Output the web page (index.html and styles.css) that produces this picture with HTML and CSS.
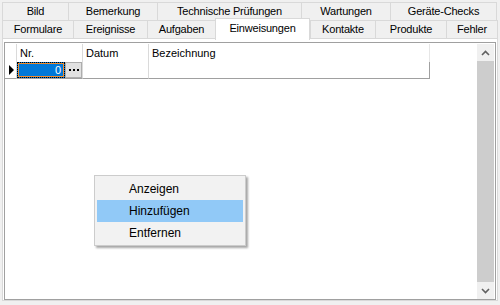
FILE: index.html
```html
<!DOCTYPE html>
<html lang="de">
<head>
    <meta charset="UTF-8">
    <title>Einweisungen</title>
    <link rel="stylesheet" href="styles.css">
</head>
<body>
    <div class="window">
        <div class="tabs">
            <div class="tab-row">
                <div class="tab w-bild">Bild</div>
                <div class="tab w-bemerkung">Bemerkung</div>
                <div class="tab w-technik">Technische Prüfungen</div>
                <div class="tab w-wartung">Wartungen</div>
                <div class="tab w-checks last">Geräte-Checks</div>
            </div>
            <div class="tab-row">
                <div class="tab w-formulare">Formulare</div>
                <div class="tab w-ereignisse">Ereignisse</div>
                <div class="tab w-aufgaben">Aufgaben</div>
                <div class="tab w-einweisungen active">Einweisungen</div>
                <div class="tab w-kontakte">Kontakte</div>
                <div class="tab w-produkte">Produkte</div>
                <div class="tab w-fehler last">Fehler</div>
            </div>
        </div>

        <div class="page">
            <div class="grid">
                <div class="table">
                    <div class="grid-row header">
                        <div class="cell row-head"></div>
                        <div class="cell col-nr">Nr.</div>
                        <div class="cell col-datum">Datum</div>
                        <div class="cell col-bez">Bezeichnung</div>
                    </div>
                    <div class="grid-row data">
                        <div class="cell row-head"><span class="current"></span></div>
                        <div class="cell col-nr edit">
                            <span class="value">0</span>
                            <span class="dots">
                                <svg width="11" height="2" viewBox="0 0 11 2"><rect x="0" y="0" width="2" height="2" fill="#000"/><rect x="4" y="0" width="2" height="2" fill="#000"/><rect x="8" y="0" width="2" height="2" fill="#000"/></svg>
                            </span>
                        </div>
                        <div class="cell col-datum"></div>
                        <div class="cell col-bez"></div>
                    </div>
                </div>
                <div class="scrollbar">
                    <div class="arrow-btn">
                        <svg width="9" height="6" viewBox="0 0 9 6"><polyline points="1,5 4.5,1.5 8,5" fill="none" stroke="#606060" stroke-width="1.6"/></svg>
                    </div>
                    <div class="thumb"></div>
                    <div class="arrow-btn">
                        <svg width="9" height="6" viewBox="0 0 9 6"><polyline points="1,1 4.5,4.5 8,1" fill="none" stroke="#606060" stroke-width="1.6"/></svg>
                    </div>
                </div>
            </div>
        </div>

        <div class="menu">
            <div class="menu-item">Anzeigen</div>
            <div class="menu-item hover">Hinzufügen</div>
            <div class="menu-item">Entfernen</div>
        </div>
    </div>
</body>
</html>
```

FILE: styles.css
```css
body {
    margin: 0;
    background-color: #f0f0f0;
    font-family: 'Liberation Sans', Arial, sans-serif;
    font-size: 11px;
    color: #000;
}
.window {
    position: relative;
    width: 500px;
    height: 305px;
    overflow: hidden;
}
.tabs {
    padding: 2px 0 0 2px;
}
.tab-row {
    display: flex;
    height: 18px;
}
.tab {
    box-sizing: border-box;
    height: 19px;
    border: 1px solid #d9d9d9;
    border-right: none;
    background-color: #f0f0f0;
    text-align: center;
    line-height: 17px;
    letter-spacing: -0.2px;
    white-space: nowrap;
}
.tab.last {
    border-right: 1px solid #d9d9d9;
}
.tab.active {
    position: relative;
    z-index: 2;
    height: 22px;
    margin-top: -2px;
    background-color: #fff;
    border-bottom: none;
    border-right: 1px solid #d9d9d9;
    line-height: 19px;
}
.w-bild { width: 66px; }
.w-bemerkung { width: 89px; }
.w-technik { width: 144px; }
.w-wartung { width: 89px; }
.w-checks { width: 107px; }
.w-formulare { width: 71px; }
.w-ereignisse { width: 74px; }
.w-aufgaben { width: 68px; }
.w-einweisungen { width: 95px; }
.w-kontakte { width: 65px; }
.w-produkte { width: 71px; }
.w-fehler { width: 52px; }

.page {
    box-sizing: border-box;
    margin-left: 2px;
    width: 496px;
    height: 263px;
    border: 1px solid #d9d9d9;
    background-color: #fff;
    padding: 3px 1px 1px 1px;
}
.grid {
    box-sizing: border-box;
    display: flex;
    height: 258px;
    border: 1px solid #a0a0a0;
    padding: 1px 1px 0 0;
    background-color: #fff;
}
.table {
    flex: 1;
}
.grid-row {
    display: flex;
}
.grid-row.header {
    height: 18px;
}
.grid-row.data {
    height: 17px;
}
.cell {
    box-sizing: border-box;
    height: 100%;
    border-right: 1px solid #dadada;
    padding-left: 3px;
    line-height: 16px;
}
.header .cell {
    line-height: 18px;
}
.data .cell {
    border-bottom: 1px solid #a0a0a0;
}
.row-head {
    width: 12px;
    padding: 0;
}
.col-nr {
    width: 66px;
}
.col-datum {
    width: 66px;
}
.col-bez {
    width: 281px;
}
.header .col-bez {
    border-right-color: #e6e6e6;
}
.data .col-bez {
    border-right-color: #a0a0a0;
}
.current {
    display: block;
    width: 0;
    height: 0;
    margin: 3px 0 0 4px;
    border-left: 5px solid #000;
    border-top: 5px solid transparent;
    border-bottom: 5px solid transparent;
}
.cell.edit {
    display: flex;
    padding: 0;
}
.value {
    box-sizing: border-box;
    width: 48px;
    height: 16px;
    background-color: #0078d7;
    color: #fff;
    text-align: right;
    padding-right: 3px;
    line-height: 14px;
    border: 1px dotted #000;
    box-shadow: inset 0 0 0 1px #f08c2c;
}
.dots {
    box-sizing: border-box;
    width: 17px;
    height: 16px;
    background-color: #e1e1e1;
    border: 1px solid #adadad;
    display: flex;
    align-items: center;
    justify-content: center;
    padding-left: 1px;
}
.dots svg {
    display: block;
}

.scrollbar {
    width: 17px;
    display: flex;
    flex-direction: column;
    background-color: #f0f0f0;
}
.arrow-btn {
    height: 17px;
    display: flex;
    align-items: center;
    justify-content: center;
}
.thumb {
    flex: 1;
    background-color: #cdcdcd;
}

.menu {
    position: absolute;
    left: 94px;
    top: 175px;
    box-sizing: border-box;
    width: 152px;
    height: 71px;
    padding: 2px;
    background-color: #f2f2f2;
    border: 1px solid #cccccc;
    box-shadow: 2px 2px 2px rgba(0, 0, 0, 0.35);
    font-size: 12px;
}
.menu-item {
    height: 22px;
    line-height: 22px;
    padding-left: 32px;
}
.menu-item.hover {
    background-color: #91c9f7;
}
```
